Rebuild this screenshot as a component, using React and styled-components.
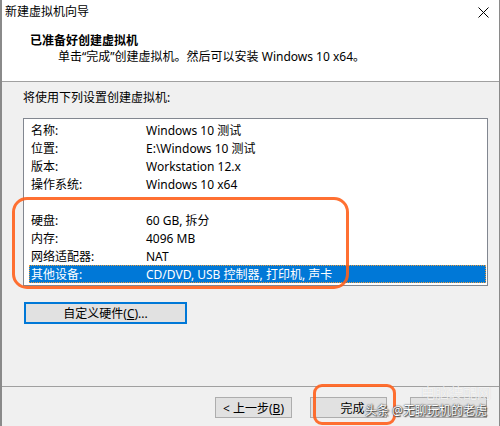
import React from 'react'
import styled, {createGlobalStyle} from 'styled-components'

const GlobalStyle = createGlobalStyle`
    html, body {
        margin: 0;
        padding: 0;
        background: #f0f0f0;
    }
    body {
        font-family: "Noto Sans", "Noto Sans CJK SC", sans-serif;
        font-size: 12px;
        color: #000;
    }
    * {
        box-sizing: border-box;
    }
`;

const Window = styled.div`
    position: relative;
    width: 500px;
    height: 426px;
    background: #f0f0f0;
    border-left: 2px solid #8a8a8a;
    border-right: 1px solid #8a8a8a;
    display: flex;
    flex-direction: column;
    overflow: hidden;
`;

const Header = styled.div`
    background: #fff;
    height: 82px;
    border-bottom: 1px solid #a0a0a0;
    flex-shrink: 0;
`;

const TitleBar = styled.div`
    height: 24px;
    display: flex;
    align-items: center;
    justify-content: space-between;
    padding: 0 10px 0 3px;
`;

const TitleText = styled.span`
    line-height: 16px;
`;

const CloseIcon = styled.svg`
    width: 11px;
    height: 11px;
`;

const HeaderTitle = styled.div`
    margin: 9px 0 0 28px;
    font-weight: bold;
    line-height: 16px;
`;

const HeaderSub = styled.div`
    margin-left: 56px;
    line-height: 16px;
`;

const Body = styled.div`
    flex: 1;
    padding: 8px 0 0 21px;
`;

const Caption = styled.div`
    line-height: 16px;
`;

const ListBox = styled.div`
    margin-top: 12px;
    width: 465px;
    height: 168px;
    background: #fff;
    border: 1px solid #828790;
    padding: 2px 1px 0 5px;
`;

const Row = styled.div`
    display: grid;
    grid-template-columns: 115px 1fr;
    height: 18px;
    align-items: center;
    padding-left: 2px;
    white-space: nowrap;
    background: ${p => p.selected ? '#0078d7' : 'transparent'};
    color: ${p => p.selected ? '#fff' : '#000'};
    outline: ${p => p.selected ? '1px dotted #e89a3c' : 'none'};
    outline-offset: -1px;
`;

const HwButton = styled.button`
    margin-top: 16px;
    margin-left: 1px;
    width: 163px;
    height: 22px;
    background: #e1e1e1;
    border: 2px solid #0078d7;
    font: inherit;
    padding: 0;
    color: #000;
`;

const Footer = styled.div`
    height: 40px;
    flex-shrink: 0;
    border-top: 1px solid #a0a0a0;
    display: flex;
    justify-content: flex-end;
    align-items: flex-start;
    padding: 10px 12px 0 0;
    gap: 23px;
`;

const ButtonPair = styled.div`
    display: flex;
    gap: 18px;
`;

const DlgButton = styled.button`
    width: 77px;
    height: 21px;
    background: #e1e1e1;
    border: 1px solid #adadad;
    font: inherit;
    padding: 0 0 0 ${p => p.shift || 0}px;
    color: #000;
`;

const Key = styled.span`
    text-decoration: underline;
`;

const Mark = styled.div`
    position: absolute;
    border: 3px solid rgba(255, 96, 28, 0.9);
    border-radius: ${p => p.radius}px;
    pointer-events: none;
`;

const Watermark = styled.div`
    position: absolute;
    left: 363px;
    top: 402px;
    font-size: 12px;
    line-height: 18px;
    color: #fff;
    white-space: nowrap;
    text-shadow: 0 0 1px #333, 0 0 2px #555, 1px 1px 1px #444;
`;

const SiteMark = styled.div`
    position: absolute;
    left: 419px;
    top: 382px;
    font-size: 14px;
    color: rgba(255, 255, 255, 0.75);
    text-shadow: 0 0 1px rgba(140, 140, 140, 0.4);
    white-space: nowrap;
`;

const rows = [
    ['名称:', 'Windows 10 测试'],
    ['位置:', 'E:\\Windows 10 测试'],
    ['版本:', 'Workstation 12.x'],
    ['操作系统:', 'Windows 10 x64'],
    ['', ''],
    ['硬盘:', '60 GB, 拆分'],
    ['内存:', '4096 MB'],
    ['网络适配器:', 'NAT'],
    ['其他设备:', 'CD/DVD, USB 控制器, 打印机, 声卡'],
]

function App() {
    return (
        <>
            <GlobalStyle />
            <Window>
                <Header>
                    <TitleBar>
                        <TitleText>新建虚拟机向导</TitleText>
                        <CloseIcon viewBox="0 0 11 11">
                            <path d="M0.5 0.5 L10.5 10.5 M10.5 0.5 L0.5 10.5" stroke="#000" strokeWidth="1" fill="none" />
                        </CloseIcon>
                    </TitleBar>
                    <HeaderTitle>已准备好创建虚拟机</HeaderTitle>
                    <HeaderSub>单击“完成”创建虚拟机。然后可以安装 Windows 10 x64。</HeaderSub>
                </Header>
                <Body>
                    <Caption>将使用下列设置创建虚拟机:</Caption>
                    <ListBox>
                        {rows.map(([k, v], i) => (
                            <Row key={i} selected={i === rows.length - 1}>
                                <span>{k}</span>
                                <span>{v}</span>
                            </Row>
                        ))}
                    </ListBox>
                    <HwButton>自定义硬件(<Key>C</Key>)...</HwButton>
                </Body>
                <Footer>
                    <ButtonPair>
                        <DlgButton>&lt; 上一步(<Key>B</Key>)</DlgButton>
                        <DlgButton shift={8}>完成</DlgButton>
                    </ButtonPair>
                    <DlgButton />
                </Footer>
                <Mark radius={15} style={{left: 10, top: 197, width: 337, height: 92}} />
                <Mark radius={9} style={{left: 311, top: 384, width: 83, height: 41}} />
                <SiteMark>电脑装配网</SiteMark>
                <Watermark>头条 @无聊玩机的老虎</Watermark>
            </Window>
        </>
    )
}

export default App
